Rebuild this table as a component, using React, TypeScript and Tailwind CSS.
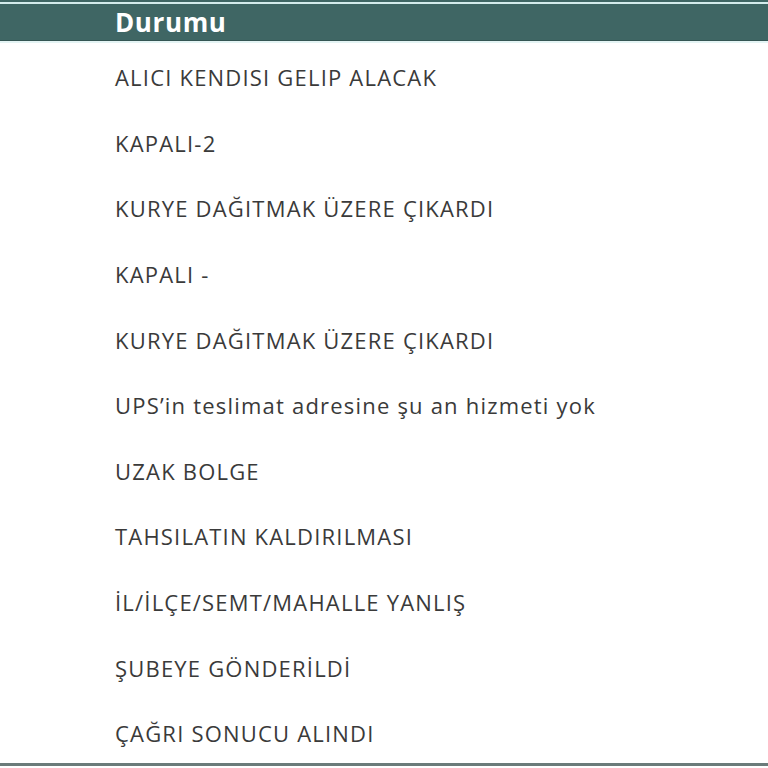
import React from 'react';

const statuses = [
  'ALICI KENDISI GELIP ALACAK',
  'KAPALI-2',
  'KURYE DAĞITMAK ÜZERE ÇIKARDI',
  'KAPALI -',
  'KURYE DAĞITMAK ÜZERE ÇIKARDI',
  'UPS\u2019in teslimat adresine şu an hizmeti yok',
  'UZAK BOLGE',
  'TAHSILATIN KALDIRILMASI',
  'İL/İLÇE/SEMT/MAHALLE YANLIŞ',
  'ŞUBEYE GÖNDERİLDİ',
  'ÇAĞRI SONUCU ALINDI',
];

export default function App() {
  return (
    <div className="w-[768px] h-[768px] bg-white overflow-hidden" style={{ fontFamily: '"Open Sans", Lato, sans-serif' }}>
      <div className="h-[2px] bg-[#3f6664]" />
      <div className="h-[2px] bg-[#d4ecec]" />
      <div className="h-[37px] bg-[#3f6664] border-b border-[#355654] pl-[115px] flex items-center">
        <span className="text-white font-bold text-[26px] leading-none tracking-[0.6px]">Durumu</span>
      </div>
      <div className="h-[2px] bg-[#e4f4f4]" />
      <ul className="flex flex-col pt-[2px]">
        {statuses.map((s, i) => (
          <li key={i} className="h-[65.6px] pl-[115px] flex items-center text-[22px] text-[#3a3a3a] tracking-[1.2px]">
            {s}
          </li>
        ))}
      </ul>
      <div className="h-[3px] bg-[#6b7b7a] mt-[-4px]" />
    </div>
  );
}
